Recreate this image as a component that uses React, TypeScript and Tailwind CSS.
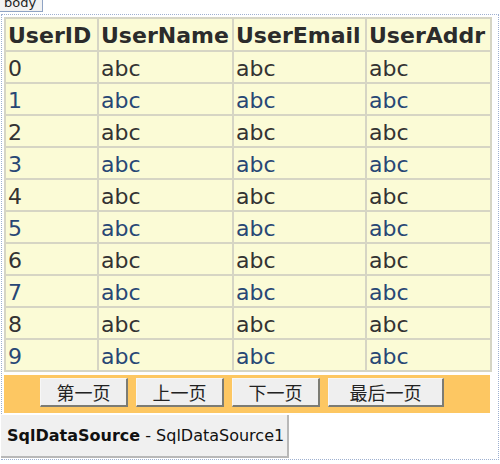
import React from "react";

const rows = Array.from({ length: 10 }, (_, i) => i);
const pages = [
  { label: "第一页", w: "w-[88px]" },
  { label: "上一页", w: "w-[88px]" },
  { label: "下一页", w: "w-[88px]" },
  { label: "最后一页", w: "w-[116px]" },
];

export default function App() {
  return (
    <div className="relative h-[464px] w-[500px] overflow-hidden bg-white font-['DejaVu_Sans',sans-serif]">
      {/* body tag */}
      <div className="absolute left-0 top-[-4px] z-10 h-[16px] w-[43px] border-b border-r border-[#8fa3c4] bg-[#f2f2f2] pl-[4px] text-[13px] leading-[14px] text-[#222]">
        body
      </div>

      {/* design surface */}
      <div className="absolute left-[1px] right-[1px] top-[14px] h-[446px] border border-dotted border-[#9eb0d0] pl-[2px] pt-[2px]">
        <table className="w-[486px] table-fixed border-collapse text-[22px] leading-none text-[#333]">
          <colgroup>
            <col className="w-[93px]" />
            <col className="w-[135px]" />
            <col className="w-[133px]" />
            <col className="w-[125px]" />
          </colgroup>
          <thead>
            <tr className="h-[33px] bg-[#fbfbd6] font-bold text-[#2b2b2b]">
              {["UserID", "UserName", "UserEmail", "UserAddr"].map((h) => (
                <th key={h} className="border-2 border-[#d6d5c4] px-[2px] pt-[2px] text-left align-middle whitespace-nowrap">
                  {h}
                </th>
              ))}
            </tr>
          </thead>
          <tbody>
            {rows.map((i) => (
              <tr
                key={i}
                className={`h-[32px] bg-[#fbfbd6] ${i % 2 === 1 ? "text-[#284775]" : "text-[#333]"}`}
              >
                <td className="border-2 border-[#d6d5c4] px-[2px] pt-[3px] align-middle">{i}</td>
                <td className="border-2 border-[#d6d5c4] px-[2px] pt-[3px] align-middle">abc</td>
                <td className="border-2 border-[#d6d5c4] px-[2px] pt-[3px] align-middle">abc</td>
                <td className="border-2 border-[#d6d5c4] px-[2px] pt-[3px] align-middle">abc</td>
              </tr>
            ))}
          </tbody>
        </table>

        {/* pager */}
        <div className="mt-[3px] flex h-[38px] w-[486px] items-start gap-[8px] bg-[#fdc762] pl-[36px] pt-[3px]">
          {pages.map((p) => (
            <button
              key={p.label}
              className={`${p.w} h-[29px] border border-b-2 border-r-2 border-[#f7f7f7] border-b-[#7c7c74] border-r-[#7c7c74] bg-[#efefef] font-['Noto_Sans_CJK_SC',sans-serif] text-[18px] font-normal leading-none text-[#222]`}
            >
              {p.label}
            </button>
          ))}
        </div>

        {/* data source */}
        <div className="ml-[-3px] mt-[2px] flex h-[43px] w-[288px] items-center border-b-2 border-r-2 border-[#b8b8b8] bg-[#f0f0f0] pl-[6px] text-[16px] text-[#111]">
          <span className="font-bold">SqlDataSource</span>
          <span className="whitespace-pre"> - SqlDataSource1</span>
        </div>
      </div>
    </div>
  );
}
